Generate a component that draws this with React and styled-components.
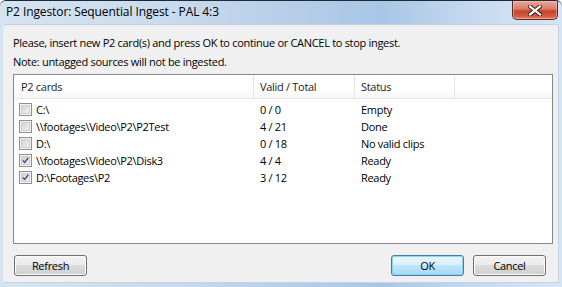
import React from 'react';
import styled, { createGlobalStyle } from 'styled-components';

const Global = createGlobalStyle`
  html, body { margin: 0; padding: 0; background: #ffffff; }
  body { font-family: "Open Sans", "Noto Sans", sans-serif; font-size: 11px; letter-spacing: -0.3px; color: #000; }
  * { box-sizing: border-box; }
`;

const Window = styled.div`
  width: 562px;
  height: 287px;
  display: flex;
  flex-direction: column;
  padding: 0 3px 4px 3px;
  border-top: 1px solid #1f2a36;
  border-radius: 6px 6px 0 0;
  background: linear-gradient(to right, #d6e3f1 0%, #c9dbee 30%, #b3cce8 55%, #a9c6e6 68%, #c6dbf1 85%, #d6e5f5 100%);
`;

const TitleBar = styled.div`
  height: 23px;
  display: flex;
  align-items: flex-start;
  justify-content: space-between;
  padding-left: 3px;
`;

const Title = styled.div`
  font-size: 12px;
  line-height: 22px;
  color: #000;
  letter-spacing: -0.1px;
`;

const CloseButton = styled.div`
  width: 46px;
  height: 19px;
  margin-right: 1px;
  display: flex;
  align-items: center;
  justify-content: center;
  border: 1px solid #5b2a22;
  border-top: none;
  border-radius: 0 0 5px 5px;
  background: linear-gradient(to bottom, #e9a99a 0%, #dc7a65 45%, #c7432c 55%, #d35a40 85%, #e6876c 100%);
  box-shadow: inset 0 0 0 1px rgba(255, 210, 200, 0.45);
`;

const Client = styled.div`
  flex: 1;
  display: flex;
  flex-direction: column;
  background: #f0f0f0;
  border: 1px solid #c5d4e4;
  border-left-color: #e6edf5;
  padding: 8px 5px 6px 9px;
`;

const Message = styled.div`
  line-height: 19px;
  font-size: 11px;
`;

const ListBox = styled.div`
  margin-top: 3px;
  height: 170px;
  border: 1px solid #828790;
  background: #ffffff;
  display: flex;
  flex-direction: column;
`;

const Header = styled.div`
  display: grid;
  grid-template-columns: 240px 101px 100px 1fr;
  height: 24px;
  background: linear-gradient(to bottom, #ffffff 0%, #ffffff 60%, #f6f7f8 100%);
  border-bottom: 1px solid #e5e5e5;
`;

const HeaderCell = styled.div`
  display: flex;
  align-items: center;
  padding-left: ${p => p.$pad || 6}px;
  border-right: 1px solid #e5e5e5;
  color: #1c1c1c;
  &:last-child { border-right: none; }
`;

const Rows = styled.div`
  padding-top: 2px;
  display: flex;
  flex-direction: column;
`;

const Row = styled.div`
  display: grid;
  grid-template-columns: 240px 101px 100px 1fr;
  height: 17px;
  align-items: center;
`;

const Cell = styled.div`
  display: flex;
  align-items: center;
  padding-left: ${p => p.$pad || 6}px;
  white-space: nowrap;
`;

const Box = styled.span`
  width: 13px;
  height: 13px;
  margin-right: 4px;
  border: 1px solid #8f8f8f;
  display: flex;
  align-items: center;
  justify-content: center;
  box-shadow: inset 0 0 0 1px #f4f4f4, inset 0 0 0 2px #cfcfcf;
  background-color: #f4f4f4;
  background-image: linear-gradient(135deg, #cbcbcb 0%, #e6e6e6 60%, #f7f7f7 100%);
  background-clip: content-box;
  padding: 2px;
  flex: none;
`;

const Footer = styled.div`
  margin-top: 11px;
  display: flex;
  justify-content: space-between;
  padding-left: 1px;
  padding-right: 7px;
`;

const Group = styled.div`
  display: flex;
  gap: 9px;
`;

const Button = styled.div`
  width: 73px;
  height: 21px;
  display: flex;
  align-items: center;
  justify-content: center;
  border: 1px solid ${p => (p.$default ? '#3c7fb1' : '#707070')};
  border-radius: 3px;
  background: ${p =>
    p.$default
      ? 'linear-gradient(to bottom, #eaf6fd 0%, #d9f0fc 50%, #bee6fd 50%, #a7d9f5 100%)'
      : 'linear-gradient(to bottom, #f2f2f2 0%, #ebebeb 50%, #dddddd 50%, #cfcfcf 100%)'};
  box-shadow: inset 0 0 0 1px ${p => (p.$default ? '#8ed4f5' : '#fcfcfc')};
  color: #000;
`;

const Check = () => (
  <svg width="9" height="9" viewBox="0 0 9 9">
    <path d="M1 4.5 L3.5 7 L8 1" fill="none" stroke="#3c4f8a" strokeWidth="1.8" />
  </svg>
);

const CloseGlyph = () => (
  <svg width="14" height="11" viewBox="0 0 14 11">
    <path d="M2 1.5 L12 9.5 M12 1.5 L2 9.5" stroke="#3b2420" strokeWidth="4.2" strokeLinecap="square" />
    <path d="M2 1.5 L12 9.5 M12 1.5 L2 9.5" stroke="#ffffff" strokeWidth="2.2" strokeLinecap="square" />
  </svg>
);

const rows = [
  { name: 'C:\\', valid: '0 / 0', status: 'Empty', checked: false },
  { name: '\\\\footages\\Video\\P2\\P2Test', valid: '4 / 21', status: 'Done', checked: false },
  { name: 'D:\\', valid: '0 / 18', status: 'No valid clips', checked: false },
  { name: '\\\\footages\\Video\\P2\\Disk3', valid: '4 / 4', status: 'Ready', checked: true },
  { name: 'D:\\Footages\\P2', valid: '3 / 12', status: 'Ready', checked: true },
];

export default function App() {
  return (
    <>
      <Global />
      <Window>
        <TitleBar>
          <Title>P2 Ingestor: Sequential Ingest - PAL 4:3</Title>
          <CloseButton>
            <CloseGlyph />
          </CloseButton>
        </TitleBar>
        <Client>
          <Message>Please, insert new P2 card(s) and press OK to continue or CANCEL to stop ingest.</Message>
          <Message>Note: untagged sources will not be ingested.</Message>
          <ListBox>
            <Header>
              <HeaderCell $pad={7}>P2 cards</HeaderCell>
              <HeaderCell>Valid / Total</HeaderCell>
              <HeaderCell>Status</HeaderCell>
              <HeaderCell />
            </Header>
            <Rows>
              {rows.map(r => (
                <Row key={r.name}>
                  <Cell $pad={5}>
                    <Box>{r.checked && <Check />}</Box>
                    {r.name}
                  </Cell>
                  <Cell>{r.valid}</Cell>
                  <Cell>{r.status}</Cell>
                  <Cell />
                </Row>
              ))}
            </Rows>
          </ListBox>
          <Footer>
            <Button>Refresh</Button>
            <Group>
              <Button $default>OK</Button>
              <Button>Cancel</Button>
            </Group>
          </Footer>
        </Client>
      </Window>
    </>
  );
}
